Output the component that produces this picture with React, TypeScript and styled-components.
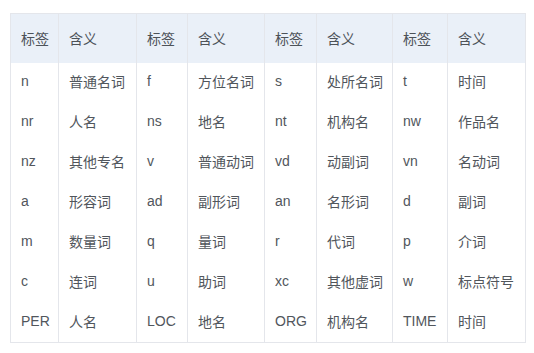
import React from "react";
import styled, { createGlobalStyle } from "styled-components";

const GlobalStyle = createGlobalStyle`
  body {
    margin: 0;
    background: #ffffff;
    font-family: "Liberation Sans", "Noto Sans CJK SC", sans-serif;
  }
`;

const Page = styled.div`
  padding: 13px 0 0 10px;
`;

const Table = styled.table`
  width: 515px;
  table-layout: fixed;
  border-collapse: collapse;
  border: 1px solid #e4e6eb;
  font-size: 14px;
  color: #51565c;
`;

const HeadRow = styled.tr`
  height: 49px;
  background: #eaf0f8;
`;

const BodyRow = styled.tr`
  height: 40px;
`;

const Th = styled.th`
  font-weight: normal;
  text-align: left;
  padding: 0 0 1px 10px;
  border-left: 1px solid #e4e6eb;
  color: #4d5258;
`;

const Td = styled.td`
  padding: 0 0 3px 10px;
  border-left: 1px solid #e4e6eb;
  white-space: nowrap;
`;

const widths = [48, 78, 51, 77, 52, 76, 55, 78];

const rows: string[][] = [
  ["n", "普通名词", "f", "方位名词", "s", "处所名词", "t", "时间"],
  ["nr", "人名", "ns", "地名", "nt", "机构名", "nw", "作品名"],
  ["nz", "其他专名", "v", "普通动词", "vd", "动副词", "vn", "名动词"],
  ["a", "形容词", "ad", "副形词", "an", "名形词", "d", "副词"],
  ["m", "数量词", "q", "量词", "r", "代词", "p", "介词"],
  ["c", "连词", "u", "助词", "xc", "其他虚词", "w", "标点符号"],
  ["PER", "人名", "LOC", "地名", "ORG", "机构名", "TIME", "时间"],
];

export default function App() {
  return (
    <>
      <GlobalStyle />
      <Page>
        <Table>
          <colgroup>
            {widths.map((w, i) => (
              <col key={i} style={{ width: w }} />
            ))}
          </colgroup>
          <thead>
            <HeadRow>
              {[0, 1, 2, 3].map((i) => (
                <React.Fragment key={i}>
                  <Th>标签</Th>
                  <Th>含义</Th>
                </React.Fragment>
              ))}
            </HeadRow>
          </thead>
          <tbody>
            {rows.map((r, i) => (
              <BodyRow key={i}>
                {r.map((c, j) => (
                  <Td key={j}>{c}</Td>
                ))}
              </BodyRow>
            ))}
          </tbody>
        </Table>
      </Page>
    </>
  );
}
